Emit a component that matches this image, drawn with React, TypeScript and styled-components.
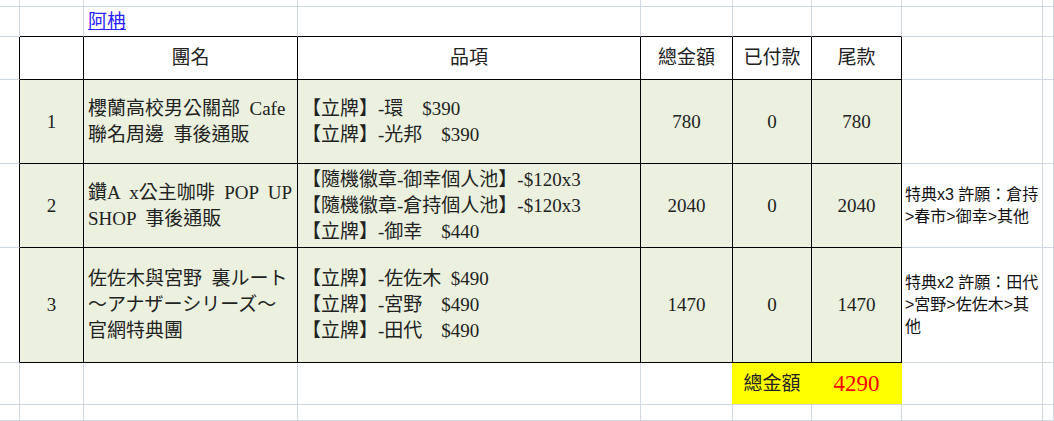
import React from 'react';
import styled, { createGlobalStyle } from 'styled-components';

const GRID = '#d0d7e5';
const INK = '#000';
const GREEN = '#ebf1de';
const YELLOW = '#ffff00';

const GlobalStyle = createGlobalStyle`
  html, body {
    margin: 0;
    padding: 0;
    background: #fff;
  }
  body {
    font-family: 'Liberation Serif', 'Noto Sans CJK TC', serif;
    color: #222;
  }
`;

const Sheet = styled.div`
  display: grid;
  grid-template-columns: 20px 64px 214px 343px 92px 79px 90px 141px 11px;
  grid-template-rows: 7px 30px 43px 84px 84px 115px 42px 16px;
  width: 1054px;
  height: 421px;
  overflow: hidden;
`;

type CellProps = {
  $right?: string;
  $bottom?: string;
  $bg?: string;
  $left?: boolean;
  $end?: boolean;
};

const Cell = styled.div<CellProps>`
  box-sizing: border-box;
  border-right: 1px solid ${({ $right }) => $right ?? GRID};
  border-bottom: 1px solid ${({ $bottom }) => $bottom ?? GRID};
  background: ${({ $bg }) => $bg ?? 'transparent'};
  display: flex;
  flex-direction: column;
  justify-content: ${({ $end }) => ($end ? 'flex-end' : 'center')};
  align-items: ${({ $left }) => ($left ? 'flex-start' : 'center')};
  padding: 0 4px;
  font-size: 19px;
  line-height: 26px;
  white-space: pre;
  overflow: hidden;
`;

const NoteCell = styled(Cell)`
  padding: 0 3px;
  font-family: 'Liberation Sans', 'Noto Sans CJK TC', sans-serif;
  font-size: 16px;
  line-height: 22px;
  color: #111;
`;

const Line = styled.div`
  white-space: pre;
`;

const NameLink = styled.a`
  color: #2a22ff;
  text-decoration: underline;
  line-height: 24px;
  padding-bottom: 2px;
  cursor: pointer;
`;

const TotalAmount = styled.span<{ $size?: number }>`
  color: #ff0000;
  font-size: ${({ $size }) => $size ?? 23}px;
`;

type Order = {
  no: string;
  name: string[];
  items: string[];
  total: number;
  paid: number;
  note: string[];
};

const orders: Order[] = [
  {
    no: '1',
    name: ['櫻蘭高校男公關部  Cafe', '聯名周邊  事後通販'],
    items: ['【立牌】-環　$390', '【立牌】-光邦　$390'],
    total: 780,
    paid: 0,
    note: [],
  },
  {
    no: '2',
    name: ['鑽A  x公主咖啡  POP  UP', 'SHOP  事後通販'],
    items: ['【隨機徽章-御幸個人池】-$120x3', '【隨機徽章-倉持個人池】-$120x3', '【立牌】-御幸　$440'],
    total: 2040,
    paid: 0,
    note: ['特典x3 許願：倉持', '>春市>御幸>其他'],
  },
  {
    no: '3',
    name: ['佐佐木與宮野  裏ルート', '～アナザーシリーズ～', '官網特典團'],
    items: ['【立牌】-佐佐木  $490', '【立牌】-宮野　$490', '【立牌】-田代　$490'],
    total: 1470,
    paid: 0,
    note: ['特典x2 許願：田代', '>宮野>佐佐木>其', '他'],
  },
];

const headers = ['', '團名', '品項', '總金額', '已付款', '尾款'];

const Lines: React.FC<{ lines: string[] }> = ({ lines }) => (
  <>
    {lines.map((l, i) => (
      <Line key={i}>{l}</Line>
    ))}
  </>
);

const App: React.FC = () => {
  const grandTotal = orders.reduce((s, o) => s + o.total - o.paid, 0);

  return (
    <>
      <GlobalStyle />
      <Sheet>
        {/* top partial row */}
        {Array.from({ length: 9 }).map((_, i) => (
          <Cell key={`r0-${i}`} />
        ))}

        {/* title row */}
        <Cell />
        <Cell $bottom={INK} />
        <Cell $bottom={INK} $left $end>
          <NameLink>阿柟</NameLink>
        </Cell>
        <Cell $bottom={INK} />
        <Cell $bottom={INK} />
        <Cell $bottom={INK} />
        <Cell $bottom={INK} />
        <Cell />
        <Cell />

        {/* header */}
        <Cell $right={INK} />
        {headers.map((h, i) => (
          <Cell key={`h-${i}`} $right={INK} $bottom={INK} $bg="#fff">
            {h}
          </Cell>
        ))}
        <Cell />
        <Cell />

        {/* orders */}
        {orders.map((o) => (
          <React.Fragment key={o.no}>
            <Cell $right={INK} />
            <Cell $right={INK} $bottom={INK} $bg={GREEN}>
              {o.no}
            </Cell>
            <Cell $right={INK} $bottom={INK} $bg={GREEN} $left>
              <Lines lines={o.name} />
            </Cell>
            <Cell $right={INK} $bottom={INK} $bg={GREEN} $left>
              <Lines lines={o.items} />
            </Cell>
            <Cell $right={INK} $bottom={INK} $bg={GREEN}>
              {o.total}
            </Cell>
            <Cell $right={INK} $bottom={INK} $bg={GREEN}>
              {o.paid}
            </Cell>
            <Cell $right={INK} $bottom={INK} $bg={GREEN}>
              {o.total - o.paid}
            </Cell>
            <NoteCell $left>
              <Lines lines={o.note} />
            </NoteCell>
            <Cell />
          </React.Fragment>
        ))}

        {/* total row */}
        <Cell />
        <Cell />
        <Cell />
        <Cell />
        <Cell $right={YELLOW} />
        <Cell $bg={YELLOW} $right={YELLOW}>
          總金額
        </Cell>
        <Cell $bg={YELLOW} $right={YELLOW}>
          <TotalAmount>{grandTotal}</TotalAmount>
        </Cell>
        <Cell />
        <Cell />

        {/* bottom partial row */}
        {Array.from({ length: 9 }).map((_, i) => (
          <Cell key={`r7-${i}`} />
        ))}
      </Sheet>
    </>
  );
};

export default App;
